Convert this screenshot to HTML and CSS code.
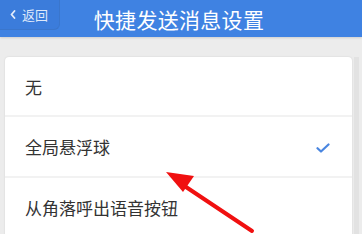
FILE: index.html
```html
<!DOCTYPE html>
<html lang="zh">
<head>
<meta charset="utf-8">
<link rel="stylesheet" href="styles.css">
</head>
<body>
<div class="page">
  <header class="topbar">
    <div class="back"><svg class="chev" viewBox="0 0 6 9" width="6" height="9"><path d="M4.5 1 L1.5 4.5 L4.5 8" fill="none" stroke="#e4ecfb" stroke-width="1.8" stroke-linecap="round" stroke-linejoin="round"/></svg><span>返回</span></div>
    <h1 class="title">快捷发送消息设置</h1>
  </header>
  <main class="content">
    <ul class="card">
      <li class="row">无</li>
      <li class="row">全局悬浮球
        <svg class="check" viewBox="0 0 14 10" width="14" height="10"><path d="M1.5 5.2 L5 8.5 L12.5 1.5" fill="none" stroke="#4a86e0" stroke-width="2.2" stroke-linecap="round" stroke-linejoin="round"/></svg>
      </li>
      <li class="row">从角落呼出语音按钮</li>
    </ul>
    <div class="scrollbar"></div>
  </main>
  <svg class="arrow" viewBox="0 0 362 234" width="362" height="234">
    <line x1="252" y1="231" x2="180" y2="183" stroke="#f01010" stroke-width="4" stroke-linecap="round"/>
    <polygon points="166,172 194,176 183,192" fill="#f01010"/>
  </svg>
</div>
</body>
</html>
```
FILE: styles.css
```css
* { box-sizing: border-box; }
html, body { margin: 0; padding: 0; }
body {
  width: 362px;
  height: 234px;
  overflow: hidden;
  font-family: "Noto Sans CJK SC", "Noto Sans", sans-serif;
  background: #ececec;
}
.page { position: relative; width: 362px; height: 234px; }
.topbar {
  height: 37px;
  background: #3f82e2;
  display: flex;
  align-items: center;
  position: relative;
  box-shadow: 0 1px 2px rgba(0,0,0,0.12);
}
.back {
  position: absolute;
  left: -1px;
  top: 0;
  width: 61px;
  height: 30px;
  border: 1px solid #3a76cc;
  border-top: none;
  border-radius: 0 0 6px 0;
  background: #3b7cdb;
  color: #dfe9fa;
  font-size: 13px;
  display: flex;
  align-items: center;
  padding-left: 10px;
  gap: 6px;
}
.chev { display: block; }
.title {
  margin: 0;
  width: 100%;
  text-align: center;
  color: #ffffff;
  font-size: 21px;
  font-weight: 400;
  letter-spacing: 0.3px;
  padding-right: 4px;
}
.content {
  display: flex;
  padding: 20px 0 0 5px;
}
.card {
  list-style: none;
  margin: 0;
  padding: 0;
  width: 347px;
  background: #fff;
  border-radius: 4px 4px 0 0;
  box-shadow: 0 0 2px rgba(0,0,0,0.12);
}
.row {
  height: 61px;
  display: flex;
  align-items: center;
  justify-content: space-between;
  padding: 0 22px 0 20px;
  font-size: 17px;
  color: #333;
  border-bottom: 2px solid #f2f2f2;
}
.row:first-child { height: 60px; }
.check { margin-top: 2px; }
.scrollbar {
  width: 5px;
  height: 180px;
  margin-left: 2px;
  background: #e2e2e2;
}
.arrow { position: absolute; left: 0; top: 0; pointer-events: none; }
```
